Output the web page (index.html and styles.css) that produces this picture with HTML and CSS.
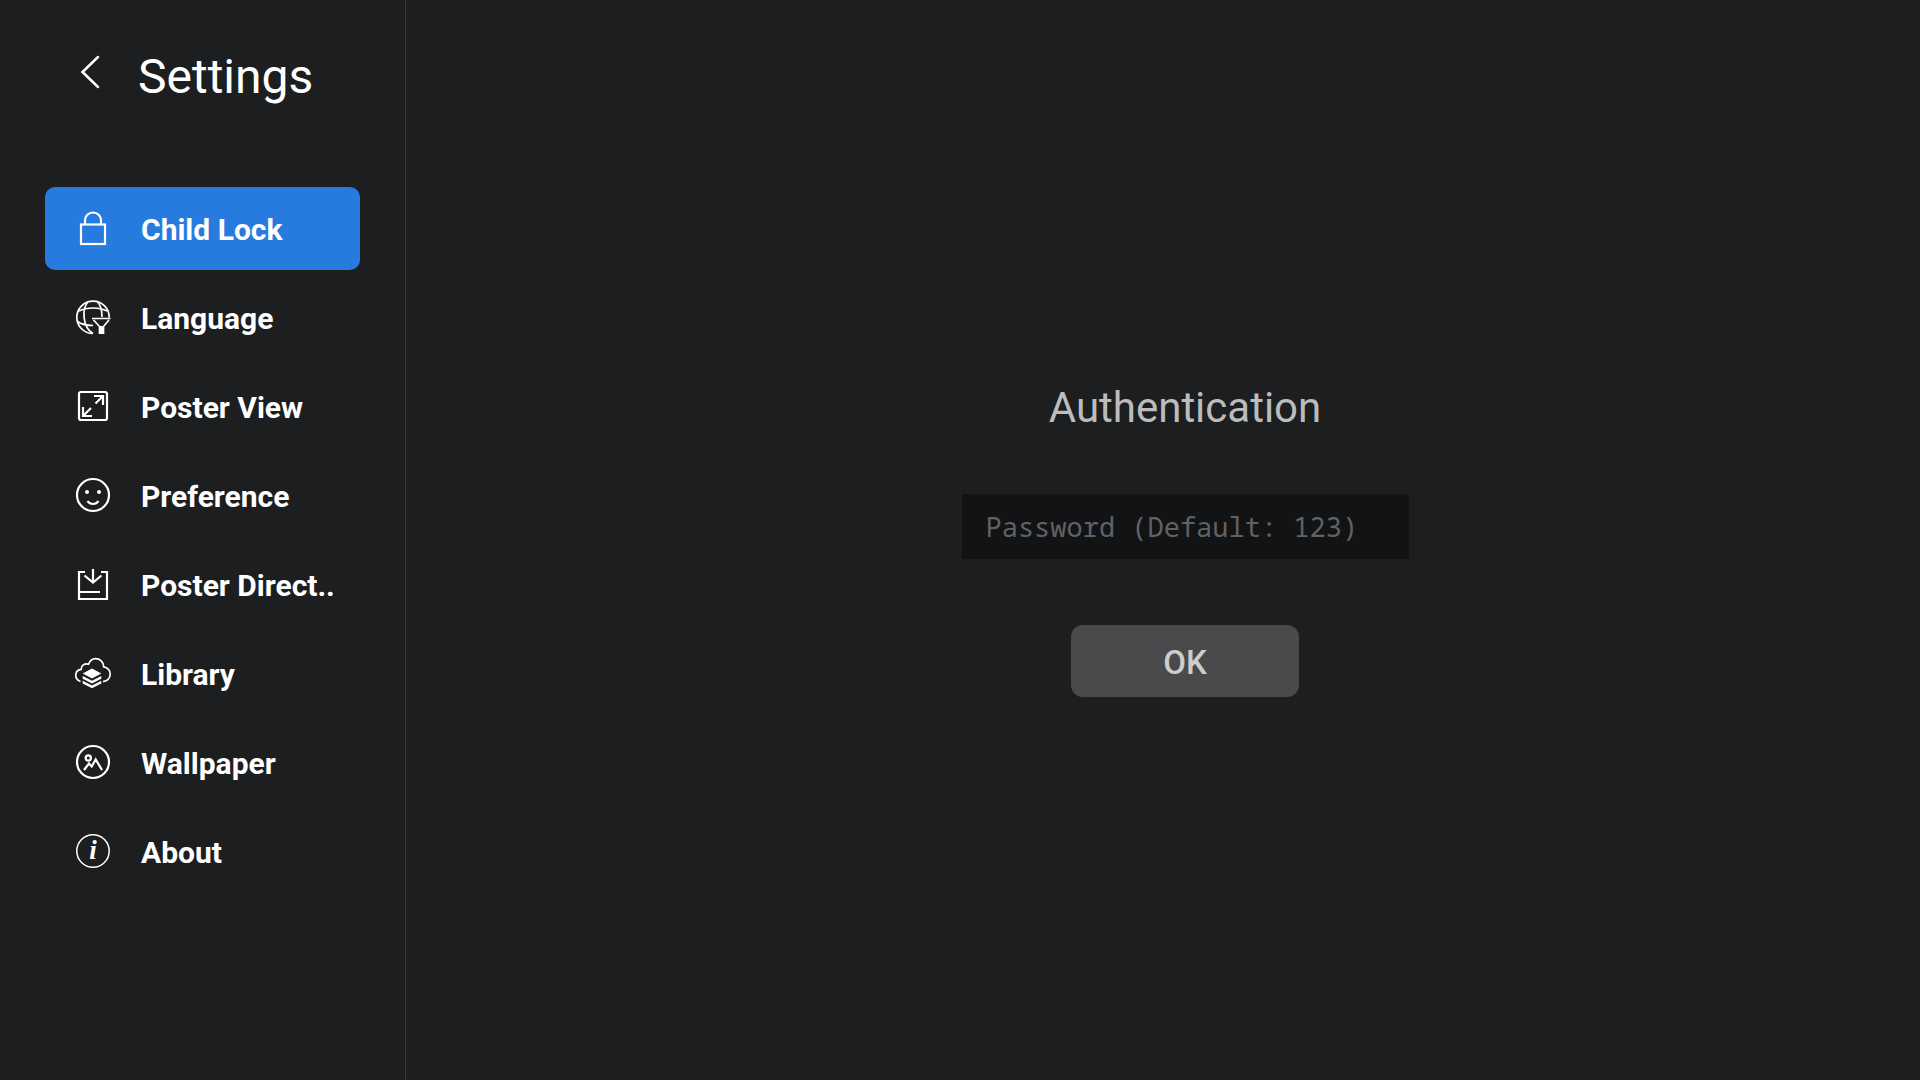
FILE: index.html
```
<!DOCTYPE html>
<html lang="en">
<head>
<meta charset="UTF-8">
<title>Settings</title>
<meta name="viewport" content="width=device-width, initial-scale=1.0">
<link rel="stylesheet" href="styles.css">
</head>
<body>
<aside class="sidebar">
  <header class="sidebar-header">
    <button type="button" class="back-btn" aria-label="Back">
      <svg class="back-icon" viewBox="0 0 36 48"><path d="M23 9 7.500 24 23 39"/></svg>
    </button>
    <h1>Settings</h1>
  </header>

  <nav class="menu">
    <a href="#child-lock" class="menu-item active">
      <svg class="icon" viewBox="0 0 37 37"><path d="M10 14V10.500a8 8 0 0 1 16 0V14"/><rect x="6" y="14.500" width="24" height="19.500"/></svg>
      <span>Child Lock</span>
    </a>
    <a href="#language" class="menu-item">
      <svg class="icon" viewBox="0 0 37 37">
        <g stroke-width="1.700"><path d="M18 34.500A16.200 16.200 0 1 1 34.200 18.500"/>
        <path d="M18 34.500C7 28 7 9 13 3M22.500 3c3 3 4.500 9 4.500 15M4 12c8-4 20-4 28 0M2.500 22.500c4 3 9 4 15.500 4"/>
        <path d="M17 19.500H35.500M18.500 21 24.500 27.500V35M34 21 28.500 27.500V35"/></g>
        <path class="solid" d="M24 27h4.500v8H24z"/>
      </svg>
      <span>Language</span>
    </a>
    <a href="#poster-view" class="menu-item">
      <svg class="icon" viewBox="0 0 37 37"><rect x="4" y="4" width="28" height="28" rx="2"/><path d="M19 8H28V17M28 8 20.500 15.500M8 19V28H17M8 28 16 20"/></svg>
      <span>Poster View</span>
    </a>
    <a href="#preference" class="menu-item">
      <svg class="icon" viewBox="0 0 37 37"><circle cx="18" cy="18" r="16"/><circle class="solid" cx="12" cy="15" r="2"/><circle class="solid" cx="24" cy="15" r="2"/><path d="M12.500 24c2.500 4 8.500 4 11 0"/></svg>
      <span>Preference</span>
    </a>
    <a href="#poster-directory" class="menu-item">
      <svg class="icon" viewBox="0 0 37 37"><path d="M10 6H4V33H32V6H26M18 3V16M9.500 9.500 18 16.500 26.500 9.500M4 26H25"/></svg>
      <span>Poster Direct..</span>
    </a>
    <a href="#library" class="menu-item">
      <svg class="icon" viewBox="0 0 37 37">
        <path stroke-width="1.700" d="M5.500 26.500C1.500 25 .500 22.500 .800 19.500 1.200 16.500 3.500 14.500 6.200 14.300 6 10.500 9.500 8 13.500 9.200 15 5.500 17.500 3.700 20.500 3.700 25 3.700 28.500 7 28.700 11.800 32.500 12.500 35.300 15.500 35.200 19.300 35 23.500 32.500 26 28 26.700"/>
        <path class="solid" d="M17 13.500 26.300 18.500 17 23.500 7.700 18.500zM7.700 21 17 25.800 26.300 21V23.700L17 28.500 7.700 23.700zM7.700 25.800 17 30.600 26.300 25.800V28.500L17 33.300 7.700 28.500z"/>
      </svg>
      <span>Library</span>
    </a>
    <a href="#wallpaper" class="menu-item">
      <svg class="icon" viewBox="0 0 37 37"><circle cx="18" cy="18" r="16"/><circle cx="13.300" cy="14" r="2.600"/><path d="M9 26 14 19.500 16.700 22.500 20.700 15.500 27 26"/></svg>
      <span>Wallpaper</span>
    </a>
    <a href="#about" class="menu-item">
      <svg class="icon" viewBox="0 0 37 37"><circle cx="18" cy="18" r="16.200" stroke-width="1.500"/><text class="icon-text" x="18" y="26">i</text></svg>
      <span>About</span>
    </a>
  </nav>
</aside>

<main class="content">
  <form class="auth" id="authForm" autocomplete="off">
    <h2><label for="password">Authentication</label></h2>
    <input type="password" id="password" placeholder="Password (Default: 123)">
    <button type="submit">OK</button>
  </form>
</main>
</body>
</html>
```
FILE: styles.css
```
* {
box-sizing: border-box;
}
body {
margin: 0;
min-height: 100vh;
display: flex;
background: #1d1e20;
color: #fff;
font-family: Roboto, Arial, sans-serif;
}

/* sidebar */
.sidebar {
width: 406px;
flex-shrink: 0;
padding: 48px 45px;
border-right: 1px solid #38393b;
}
.sidebar-header {
display: flex;
align-items: flex-start;
gap: 27px;
padding-left: 30px;
margin-bottom: 81px;
}
.sidebar-header h1 {
margin: 0;
font-size: 48px;
line-height: 58px;
font-weight: 400;
}
.back-btn {
padding: 0;
border: none;
background: none;
color: inherit;
cursor: pointer;
}
.back-icon {
display: block;
width: 36px;
height: 48px;
fill: none;
stroke: currentColor;
stroke-width: 2.5;
stroke-linecap: round;
}
.menu {
display: flex;
flex-direction: column;
gap: 6px;
}
.menu-item {
display: flex;
align-items: center;
gap: 29px;
height: 83px;
padding-left: 30px;
border-radius: 10px;
color: #fff;
font-size: 30px;
font-weight: 700;
text-decoration: none;
white-space: nowrap;
}
.menu-item span {
padding-top: 2px;
}
.menu-item.active {
background: #287bde;
}
.icon {
width: 37px;
height: 37px;
flex-shrink: 0;
fill: none;
stroke: currentColor;
stroke-width: 2.2;
}
.icon .solid {
fill: currentColor;
stroke: none;
}
.icon-text {
fill: currentColor;
stroke: none;
font: italic 700 27px "Liberation Serif", serif;
text-anchor: middle;
}

/* password form */
.content {
flex: 1;
display: flex;
align-items: center;
justify-content: center;
padding-left: 44px;
}
.auth {
display: flex;
flex-direction: column;
align-items: center;
}
.auth h2 {
margin: 0 0 61px;
color: #bbbcbc;
font-size: 42px;
line-height: 50px;
font-weight: 400;
}
.auth input {
width: 447px;
height: 65px;
margin-bottom: 66px;
padding: 0 24px;
border: none;
outline: none;
background: #121315;
color: #bbbcbc;
font-family: "Noto Sans Mono", "DejaVu Sans Mono", monospace;
font-size: 27px;
}
.auth input::placeholder {
color: #616263;
opacity: 1;
}
.auth button {
width: 228px;
height: 72px;
padding: 2px 0 0;
border: none;
border-radius: 12px;
background: #4a4a4c;
color: #cdcdce;
font-family: inherit;
font-size: 33px;
font-weight: 500;
cursor: pointer;
}
```
